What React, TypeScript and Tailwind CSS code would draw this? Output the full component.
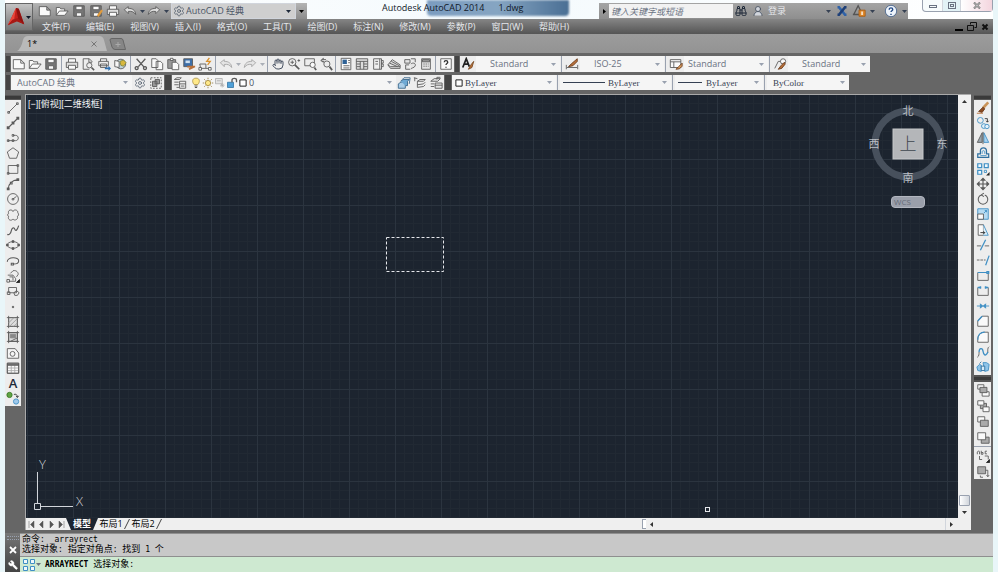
import { useState } from "react";
import type { ReactNode } from "react";
import { Binoculars, Hand, Settings, UserRound, Wrench } from "lucide-react";

const BLUE = "#3f8fc4";
const ORANGE = "#b8703a";

const ICONS: Record<string, ReactNode> = {
  new: <path d="M1.5 3h8.5l4 4v6.5h-12.5zM10 3v4h4" fill="#fafafa" />,
  open: <path d="M1.5 13V4h4l1 1.5H11V8M1.5 13l3.5-5h10l-4 5z" fill="#fafafa" />,
  save: (
    <>
      <path d="M2 2h12v12H2z" fill="#777" />
      <path d="M4.5 2.5h7v4h-7zM5 10h6v4H5z" fill="#fafafa" />
    </>
  ),
  saveAs: (
    <>
      <path d="M2 2h12v12H2z" fill="#777" />
      <path d="M4.5 2.5h7v4h-7zM5 10h6v4H5z" fill="#fafafa" />
      <path d="M15 7l-5 7" stroke="#e09a3c" strokeWidth="2.5" />
    </>
  ),
  print: (
    <>
      <path d="M4 6V2h8v4" fill="#fafafa" />
      <path d="M1.5 6h13v6h-13z" fill="#ddd" />
      <path d="M4 9.5h8V14H4z" fill="#fafafa" />
    </>
  ),
  preview: (
    <>
      <path d="M12.5 6V5l-3-3h-7v12h7M9 2v4h3.5" />
      <circle cx="9.5" cy="9.5" r="3" />
      <path d="M12 12l3 3" strokeWidth="1.8" />
    </>
  ),
  plot: (
    <>
      <path d="M4 5V2h7v3M2 5h11v5H2zM4 8h7v4H4z" fill="#eee" />
      <path d="M9 12h4v-2l3 3-3 3v-2H9z" fill="#2f6fb0" stroke="none" />
    </>
  ),
  dwf: (
    <>
      <circle cx="9" cy="8" r="5.5" fill="#bcd0d8" />
      <path d="M2 4l5 1v7l-5-1z" fill="#f7f7f7" />
      <path d="M8 5l4-1.5 3 3-3 4-3-1z" fill="#d8b73c" stroke="#8a8a3a" />
    </>
  ),
  cut: <path d="M3 2l8 9M13 2L5 11M3 11a1.7 1.7 0 1 0 .1 0zM12.500 11a1.7 1.7 0 1 0 .1 0z" strokeWidth="1.5" />,
  copyClip: <path d="M2 2h5l2 2v8H2zM7 5h5l2.5 2.5v7H7z" fill="#fafafa" />,
  paste: (
    <>
      <path d="M2 3h9v10H2z" fill="#999" />
      <path d="M5 1.5h3V4H5zM7 6h5l2.5 2.5v6H7z" fill="#fafafa" />
    </>
  ),
  match: (
    <>
      <path d="M2 2h10v9H2z" fill="#3c6ea8" />
      <path d="M4 4h5v3H4z" fill="#cfe0f0" stroke="none" />
      <path d="M6 11h9M8 14l6-3" stroke={ORANGE} strokeWidth="2" />
    </>
  ),
  blockEdit: (
    <>
      <path d="M2 8h7M9 8v5H3M3 13l-1-5M9 13h5" />
      <path d="M1 12h3v3H1zM12 12h3v3h-3z" fill="#fafafa" />
      <path d="M13 1l-3 4h4l-3 4" stroke="#d8902c" strokeWidth="1.5" />
    </>
  ),
  undo: <path d="M1.5 6.500L6 3v2c5 0 8 2 8.500 7-2-3-4.500-4-8.500-3.500V11z" fill="#ddd" />,
  redo: <path d="M14.5 6.500L10 3v2c-5 0-8 2-8.500 7 2-3 4.500-4 8.500-3.500V11z" fill="#ddd" />,
  zoomRt: (
    <>
      <circle cx="6" cy="6" r="4.2" />
      <path d="M9 9l5 5" strokeWidth="2" />
      <path d="M4 6h4M6 4v4M12 4h3M13.5 2.5v3" />
    </>
  ),
  zoomWin: (
    <>
      <path d="M9 10H2V2h11v5" />
      <circle cx="11" cy="9" r="3" fill="#fafafa" />
      <path d="M13 12l2 3" strokeWidth="2" />
    </>
  ),
  zoomPrev: (
    <>
      <circle cx="9" cy="8" r="3.5" />
      <path d="M12 11l3 4" strokeWidth="2" />
      <path d="M2 4l3-2.500V3h3M2 4l3 2V4.5" fill="#777" />
    </>
  ),
  props: (
    <>
      <path d="M2.5 1.5h11v13h-11z" fill="#fafafa" />
      <path d="M4 3h5v5H4z" fill="#2f6296" stroke="none" />
      <path d="M10.5 4h2M10.5 6.5h2M5 10h7M5 12.5h7" />
    </>
  ),
  design: <path d="M1.5 2h13v12h-13zM1.5 5h13M6 5v9M10 5v9M2 8h4M2 11h4M10 8h4M10 11h4" fill="#ddd" />,
  palettes: <path d="M3 2h9v12H3zM10 2v12M5 5h3M5 8h3M12 4h2v3h-2M12 8h2v3h-2" fill="#eee" />,
  sheets: <path d="M1 9l5-6 9 6v4H4zM1 9l3 2h11M3 7l9 4M5 5l9 5" fill="#ddd" />,
  markup: <path d="M2 3h6v4H2zM9 2h5v4M3 9v5h5M9 8c2-2 6-1 5 2s-5 2-5 4M3 9h4" fill="#e4e4e4" />,
  calc: (
    <>
      <path d="M3 2h10v12H3z" fill="#e5e5e5" />
      <path d="M4 3h8v2.5H4z" fill="#999" />
      <path d="M5 8h6M5 10.5h6" strokeDasharray="1.5 1" />
    </>
  ),
  help: (
    <>
      <path d="M2 2h12v12H2z" fill="#fafafa" />
      <path d="M6 6c0-2.500 4-2.500 4 0 0 1.500-2 1.500-2 3M8 11v1.2" strokeWidth="1.5" stroke="#333" />
    </>
  ),
  textStyle: (
    <>
      <path d="M2 12L6 2l3.500 9M3.5 8H8" stroke="#222" strokeWidth="2" />
      <path d="M14.5 5l-4 5-2 4 4-2z" fill={ORANGE} stroke="#7a4a22" />
    </>
  ),
  dimStyle: (
    <>
      <path d="M1.5 9v5M14.5 9v5M2 12h12" />
      <path d="M14 2L7 8l-3 3 5-1 5-5z" fill={ORANGE} stroke="#6b3c1c" />
    </>
  ),
  tableStyle: (
    <>
      <path d="M1.5 3h12v9h-12zM1.5 5.5h12M5.5 5.500V12" fill="#fafafa" />
      <path d="M15 7l-4 4-3 3 4-.5 3-3z" fill="#d89a5c" stroke="#6b3c1c" />
    </>
  ),
  leaderStyle: (
    <>
      <path d="M2 13l4-8h3" />
      <circle cx="11.5" cy="5" r="3" fill="#fafafa" />
      <path d="M13 6l-4 4-3 4 4-1 4-5z" fill={ORANGE} stroke="#6b3c1c" />
    </>
  ),
  mySpace: (
    <>
      <path d="M2 2h12v12H2z" strokeDasharray="2 1.5" />
      <path d="M4 6h5v6H4zM7 4h5v5H7z" fill="#999" />
    </>
  ),
  layers: (
    <>
      <path d="M1.5 4l3-2h5l-2 2zM1.5 7h5M1.5 10h5M4 13h3" />
      <path d="M7.5 6h7v8h-7zM7.5 9h7M9 11.5h4" fill="#eee" />
    </>
  ),
  bulb: (
    <>
      <path d="M8 1.500c-6 0-5 6-2.500 8.500h5C13 7.500 14 1.500 8 1.500z" fill="#ffe98a" stroke="#a58a3a" />
      <path d="M6 12h4M6.5 14h3" strokeWidth="1.5" />
    </>
  ),
  sun: (
    <>
      <circle cx="8" cy="8" r="3.5" fill="#ffe98a" stroke="#9a7c2c" />
      <path d="M8 1v2M8 13v2M1 8h2M13 8h2M3 3l1.500 1.500M11.500 11.500L13 13M13 3l-1.500 1.500M3 13l1.500-1.500" stroke="#8a6c2c" />
    </>
  ),
  vpFreeze: <path d="M2 2h9v7H2zM4 5h5M8 11h6M11 8v6M9 9l4 4M13 9l-4 4" stroke="#aaa" fill="#e4e4e4" />,
  unlock: (
    <>
      <path d="M2 7h8v7H2z" fill="#4fa0d8" stroke="#2c6f9f" />
      <path d="M8 7V4c0-3 6-3 6 0v3" strokeWidth="1.8" />
    </>
  ),
  swatch: <path d="M3 3h10v10H3z" fill="#fff" stroke="#222" strokeWidth="1.6" />,
  layerCur: (
    <>
      <path d="M1.5 9l3-2h7l-2 2v5h-8z" fill="#a9cde8" stroke="#39668a" />
      <path d="M4 6l3-2h7l-2 2v5h-2" fill="#6ea9d4" stroke="#39668a" />
      <path d="M6 4l2-2h7l-1 7" stroke="#39668a" />
    </>
  ),
  layerPrev: <path d="M1 2l4 1M5 6l3-2h6l-2 2zM5 10l7-1 2-2M5 13l7-1 2-2M5 6v7M2 2v4" />,
  layerState: <path d="M2 6l4-3h7l-3 3zM2 9h4M2 12h4M7 8h8v6H7zM7 10.5h8M9 4V1.500h4" fill="#e4e4e4" />,

  line: <path d="M3 13L13 3M2 12h2v2H2zM12 2h2v2h-2z" />,
  xline: <path d="M2 14L14 2M1.5 12.5h2v2h-2zM7 7h2v2H7zM12.5 1.5h2v2h-2z" strokeWidth="1.3" />,
  pline: <path d="M2 11h9c4 0 4-6 0-6H8M1.5 10h2v2h-2zM7 10h2v2H7zM7 4h2v2H7z" />,
  polygon: <path d="M8 2l6.500 4.800L12 14H4L1.500 6.800z" />,
  rect: <path d="M2.5 4h11v9h-11zM1.5 12h2v2h-2zM12.5 3h2v2h-2z" />,
  arc: <path d="M2.5 14C3 7 7 3.500 14 3M1.5 12.5h2v2h-2zM5 6h2v2H5zM12.5 2h2v2h-2z" strokeWidth="1.2" />,
  circle: (
    <>
      <circle cx="8" cy="8" r="6.2" />
      <path d="M8 8l4-3M7 7.5h2V9H7z" />
    </>
  ),
  cloud: <path d="M8 4c1-3 6-2 5.500 1.500C15 7 14.500 9 13 9.500c1.500 4-4 5.500-5 3-2 3-6.500 1-5-3C1.500 9 1.500 7 3 6 1.500 2 7 1 8 4z" />,
  spline: <path d="M1.5 13c2 1 4-1 4.500-4s3-5 4-2 3 1 4.500-4" strokeWidth="1.3" />,
  ellipse: (
    <>
      <ellipse cx="8" cy="8" rx="6.5" ry="3.8" />
      <path d="M.5 7h2v2h-2zM13.5 7h2v2h-2zM7 3h2v2H7zM7 11h2v2H7z" fill="#555" />
    </>
  ),
  ellipseArc: <path d="M1.500 9C1 3 15 3 14.500 8c0 2-2 3.500-6 3.500M6 10.5h2.5v2H6z" strokeWidth="1.2" />,
  insert: (
    <>
      <path d="M5 5l3-3c4-1 6 2 6 4l-2 3M2 7h6l3 4v3H4M1 12h3v3H1zM4 9h4v4" />
      <path d="M15.500 12v3.500H12z" fill="#222" stroke="#222" />
    </>
  ),
  block: <path d="M3 4h9v6H3zM1.500 9h3v3h-3zM12 7.500l3 2.500-2 3h-3l-1-3z" fill="#eee" />,
  point: <path d="M7.3 7.3h1.4v1.4H7.3z" fill="#555" />,
  hatch: (
    <>
      <path d="M3 3h10v10H3z" fill="#ddd" stroke="#999" />
      <path d="M3 1v14M13 1v14M1 3h14M1 13h14" />
      <path d="M3 9l6-6M4 13l9-9M9 13l4-4" stroke="#999" />
    </>
  ),
  gradient: (
    <>
      <path d="M3 3h10v10H3z" fill="#ddd" />
      <path d="M5 5h6v4H5z" fill="#888" stroke="#888" />
      <path d="M3 1v14M13 1v14M1 3h14M1 13h14M5 13l8-4" />
    </>
  ),
  region: (
    <>
      <path d="M1.5 3h9l4 5v6h-13z" fill="#f5f5f5" />
      <circle cx="7.5" cy="9" r="2.8" />
    </>
  ),
  table: (
    <>
      <path d="M1.5 2.5h13V14h-13z" fill="#fafafa" />
      <path d="M1.5 8h13M1.5 11h13M6 5v9M10 5v9" stroke="#aaa" />
      <path d="M1.5 2.5h13V14h-13zM1.5 4h13M1.5 5h13" />
    </>
  ),
  addSel: (
    <>
      <circle cx="4" cy="4.5" r="3" fill="#5fa544" stroke="#3d7a2a" />
      <path d="M9 4c2-1 4 0 4 3M11.5 5.5l1.500 2 1.500-2" stroke="#333" />
      <circle cx="11.5" cy="12" r="3" fill="#9fc8ea" stroke={BLUE} />
    </>
  ),

  erase: (
    <>
      <path d="M14 1.500L8 8" stroke="#c99358" strokeWidth="3" />
      <path d="M8 7l2 2-3 4-4-1z" fill="#8a4a20" stroke="#6b3c1c" />
      <path d="M1 14h7" stroke={ORANGE} />
    </>
  ),
  copy: (
    <>
      <circle cx="5" cy="5" r="3.3" stroke={BLUE} />
      <circle cx="9" cy="11.5" r="2.7" stroke={BLUE} fill="#e4f1fa" />
      <circle cx="12.5" cy="12" r="2.5" stroke={BLUE} fill="#e4f1fa" />
      <path d="M10 3h3v4M11.500 5.500L13 7l1.500-1.500" stroke="#333" />
    </>
  ),
  mirror: (
    <>
      <path d="M7 2v11H1.500z" fill="#9aa6ae" />
      <path d="M9 2v11h5.500z" fill="#a9d2f0" stroke={BLUE} />
      <path d="M8 1v14" />
    </>
  ),
  offset: (
    <>
      <path d="M2 13V9h3V6c0-5 7-5 7 0v3h2.500v4z" stroke="#2f6f9f" strokeWidth="1.4" />
      <path d="M5 11h7M7 9V6.500c0-1.500 3-1.500 3 0V9" stroke={BLUE} />
    </>
  ),
  array: (
    <>
      <path d="M2 2h4.500v4.500H2zM9.500 2H14v4.500H9.500zM2 9.500h4.500V14H2z" stroke={BLUE} strokeWidth="1.4" fill="#eef7fd" />
      <path d="M9.5 9.500H12V12H9.500z" stroke={BLUE} />
      <path d="M15.500 11.500v4h-4z" fill="#222" stroke="none" />
    </>
  ),
  move: <path d="M8 2v12M2 8h12M6 3.500L8 1.500l2 2zM6 12.500l2 2 2-2zM3.500 6l-2 2 2 2zM12.500 6l2 2-2 2z" strokeWidth="1.3" fill="#555" />,
  rotate: <path d="M6 3.300A5.500 5.500 0 1 0 10 3.300M6 3.300l3-2M6 3.300l3 2" strokeWidth="1.2" />,
  scale: (
    <>
      <path d="M2 2h12v12H2z" fill="#b6dbf2" stroke={BLUE} />
      <path d="M2 8h6.500v6H2z" fill="#fafafa" />
      <path d="M9 7l3-3M10 4h2v2" stroke={BLUE} />
    </>
  ),
  stretch: (
    <>
      <path d="M2.5 2h6v12h-6z" fill="#fafafa" />
      <path d="M8.500 2L14 14H8.500" stroke={BLUE} fill="#e0f0fa" />
      <path d="M5 11h5M8.500 9.500L10 11l-1.500 1.500" stroke="#222" />
    </>
  ),
  trim: (
    <>
      <path d="M1 9h5M10 9h5" />
      <path d="M11 2L5 14" stroke={BLUE} strokeWidth="1.4" />
    </>
  ),
  extend: (
    <>
      <path d="M1 8h10" strokeDasharray="3 1" />
      <path d="M15 3l-4 11" stroke={BLUE} strokeWidth="1.4" />
    </>
  ),
  breakPt: (
    <>
      <path d="M2 4v9h12V4" />
      <path d="M2 4h11M12.5 3h2v2h-2z" stroke={BLUE} strokeWidth="1.4" />
    </>
  ),
  breakTwo: (
    <>
      <path d="M2 4v9h12V4" />
      <path d="M2 4h4M10 4h4M5 2.5v3M11 2.5v3" stroke={BLUE} strokeWidth="1.8" />
    </>
  ),
  join: <path d="M1 8h14M5 5.500L7.500 8 5 10.500zM11 5.500L8.500 8l2.500 2.500z" stroke={BLUE} fill={BLUE} />,
  chamfer: (
    <>
      <path d="M2 14V8l5-5.500h7V14z" fill="#fafafa" />
      <path d="M2 8l5-5.500" stroke={BLUE} strokeWidth="1.5" />
    </>
  ),
  fillet: (
    <>
      <path d="M2 14v-3c0-5 3-8.500 8-8.500h4V14z" fill="#fafafa" />
      <path d="M2 11c0-5 3-8.500 8-8.500" stroke={BLUE} strokeWidth="1.5" />
    </>
  ),
  blend: (
    <>
      <path d="M1.5 14c2-1 2-4 2-6M15 2c-2 1-1.500 4-1.500 7" />
      <path d="M3.500 8c0-5 4-5 4.500-1s3 7 5.500 1" stroke={BLUE} strokeWidth="1.5" />
    </>
  ),
  explode: (
    <>
      <path d="M1 8l3-3 2 1v7l-4-1zM8 3h4l3 2-1 7-4 1z" fill="#8fc4e8" stroke={BLUE} />
      <path d="M6 7h4v5H6zM4 4l2-2" fill="#d7ecf8" stroke="#2f6f9f" />
    </>
  ),

  front: (
    <>
      <path d="M2 2h7v5H2zM7 10h8v5H7z" fill="#fafafa" />
      <path d="M4.5 5h8v6h-8z" fill="#aaa" />
    </>
  ),
  back: (
    <>
      <path d="M5 5h7v6H5z" fill="#aaa" />
      <path d="M2 2h7v5H2zM8 9h7v5.5H8z" fill="#fafafa" />
    </>
  ),
  above: (
    <>
      <path d="M2 2h8v6H2z" fill="#fafafa" />
      <path d="M5 6h9v7H5z" fill="#aaa" />
    </>
  ),
  under: (
    <>
      <path d="M6 7h9v7H6z" fill="#aaa" />
      <path d="M2 2h9v8H2z" fill="#fafafa" />
    </>
  ),
  annoFront: (
    <>
      <path d="M4 8v4h3M10 8h4v4M1.500 6V3.500L3 2l1 1.500V6M6 2v4h2V4H6M12.500 2.500h-2v3h2" />
      <path d="M15.500 12v3.500H12z" fill="#222" stroke="#222" />
    </>
  ),
  hatchBack: (
    <>
      <path d="M2 2h9v8H2z" fill="#aaa" />
      <path d="M5 12v2h3M13.5 6v7M12 11.5l1.500 2 1.500-2M13.5 6H11" />
    </>
  ),
};

function Icon({ name, className = "h-3.5 w-3.5" }: { name: string; className?: string }) {
  return (
    <svg viewBox="0 0 16 16" className={`shrink-0 ${className}`} fill="none" stroke="#5a5a5a" strokeWidth="1" aria-hidden="true">
      {ICONS[name]}
    </svg>
  );
}

function Caret({ className = "text-gray-500" }: { className?: string }) {
  return (
    <svg viewBox="0 0 5 3" className={`h-[3px] w-[5px] shrink-0 ${className}`} fill="currentColor" aria-hidden="true">
      <path d="M0 0h5L2.500 3z" />
    </svg>
  );
}

function ToolButton({ name, label, className = "w-4" }: { name: string; label: string; className?: string }) {
  return (
    <button type="button" title={label} aria-label={label} className={`flex h-[15px] shrink-0 items-center justify-center ${className}`}>
      <Icon name={name} />
    </button>
  );
}

function MoreButton({ label, caret }: { label: string; caret?: string }) {
  return (
    <button type="button" aria-label={label} className="flex w-2 shrink-0 items-center justify-center">
      <Caret className={caret} />
    </button>
  );
}

function Separator({ className = "ml-px mr-0.5" }: { className?: string }) {
  return <div className={`w-px shrink-0 self-stretch bg-gray-400 ${className}`} />;
}

function Grip({ className = "w-1.5" }: { className?: string }) {
  return <div className={`shrink-0 self-stretch border-x border-[#666] bg-[#444] ${className}`} />;
}

type ComboProps = {
  label: string;
  options: string[];
  className: string;
  textClass?: string;
  caret?: string;
  children?: ReactNode;
};

function Combo({ label, options, className, textClass = "text-gray-500", caret = "text-gray-400", children }: ComboProps) {
  const [value, setValue] = useState(options[0]);
  return (
    <div className={`relative flex h-full shrink-0 items-center ${className}`}>
      {children}
      <select
        aria-label={label}
        value={value}
        onChange={(e) => setValue(e.target.value)}
        className={`min-w-0 flex-1 appearance-none bg-transparent pr-2.5 leading-3 outline-none ${textClass}`}
      >
        {options.map((o) => (
          <option key={o}>{o}</option>
        ))}
      </select>
      <Caret className={`pointer-events-none absolute right-1 ${caret}`} />
    </div>
  );
}

const STANDARD_GROUPS = [
  [["new", "新建"], ["open", "打开"], ["save", "保存"]],
  [["print", "打印"], ["preview", "打印预览"], ["plot", "发布"], ["dwf", "三维DWF"]],
  [["cut", "剪切"], ["copyClip", "复制"], ["paste", "粘贴"], ["match", "特性匹配"], ["blockEdit", "块编辑器"]],
];

const PALETTES = [
  ["props", "特性"],
  ["design", "设计中心"],
  ["palettes", "工具选项板"],
  ["sheets", "图纸集管理器"],
  ["markup", "标记集管理器"],
  ["calc", "快速计算器"],
];

const DRAW_TOOLS = [
  ["line", "直线"],
  ["xline", "构造线"],
  ["pline", "多段线"],
  ["polygon", "多边形"],
  ["rect", "矩形"],
  ["arc", "圆弧"],
  ["circle", "圆"],
  ["cloud", "修订云线"],
  ["spline", "样条曲线"],
  ["ellipse", "椭圆"],
  ["ellipseArc", "椭圆弧"],
  ["insert", "插入块"],
  ["block", "创建块"],
  ["point", "点"],
  ["hatch", "图案填充"],
  ["gradient", "渐变色"],
  ["region", "面域"],
  ["table", "表格"],
];

const MODIFY_TOOLS = [
  ["erase", "删除"],
  ["copy", "复制"],
  ["mirror", "镜像"],
  ["offset", "偏移"],
  ["array", "阵列"],
  ["move", "移动"],
  ["rotate", "旋转"],
  ["scale", "缩放"],
  ["stretch", "拉伸"],
  ["trim", "修剪"],
  ["extend", "延伸"],
  ["breakPt", "打断于点"],
  ["breakTwo", "打断"],
  ["join", "合并"],
  ["chamfer", "倒角"],
  ["fillet", "圆角"],
  ["blend", "光顺曲线"],
  ["explode", "分解"],
];

const ORDER_TOOLS = [
  ["front", "前置"],
  ["back", "后置"],
  ["above", "置于对象之上"],
  ["under", "置于对象之下"],
];

const MENUS = [
  "文件(F)",
  "编辑(E)",
  "视图(V)",
  "插入(I)",
  "格式(O)",
  "工具(T)",
  "绘图(D)",
  "标注(N)",
  "修改(M)",
  "参数(P)",
  "窗口(W)",
  "帮助(H)",
];

function TitleBar() {
  return (
    <div className="flex h-[19px] items-end bg-gradient-to-r from-white via-[#f4fafd] to-white">
      <div className="ml-7 flex h-4 w-[274px] shrink-0 items-center bg-gradient-to-b from-[#b4b4b4] to-[#8c8c8c] pl-[3px]">
        {[["new", "新建"], ["open", "打开"], ["save", "保存"], ["saveAs", "另存为"], ["print", "打印"], ["undo", "放弃"]].map(
          ([name, label]) => (
            <ToolButton key={name} name={name} label={label} className="w-[17px]" />
          )
        )}
        <MoreButton label="放弃列表" caret="text-gray-700" />
        <ToolButton name="redo" label="重做" />
        <MoreButton label="重做列表" caret="text-gray-700" />
        <Combo
          label="工作空间"
          options={["AutoCAD 经典", "草图与注释"]}
          className="ml-px w-[125px] border border-gray-300 bg-[#cfcfcf] pl-px"
          textClass="pl-px text-gray-600"
          caret="text-gray-800"
        >
          <Settings className="h-3 w-3 text-gray-600" strokeWidth={1.5} />
        </Combo>
        <button type="button" aria-label="自定义快速访问工具栏" className="flex flex-1 items-center justify-center">
          <Caret className="text-black" />
        </button>
      </div>

      <div className="relative flex flex-1 items-start self-stretch overflow-hidden">
        <div className="absolute left-[120px] top-0 h-4 w-[142px] rounded-b-sm bg-gradient-to-r from-[#7b9cc0] via-[#86a5c2] to-[#4a6f94] blur-[1px]" />
        <h1 className="relative whitespace-pre pl-[75px] pt-0.5 leading-3 text-gray-900">Autodesk AutoCAD 2014</h1>
        <span className="relative pl-3.5 pt-0.5 leading-3 text-gray-900">1.dwg</span>
      </div>

      <div className="flex h-4 w-[309px] shrink-0 items-center bg-gradient-to-b from-[#a4a4a4] to-[#8e8e8e]">
        <button type="button" aria-label="展开搜索" className="flex w-2.5 items-center justify-center self-stretch">
          <svg viewBox="0 0 3 5" className="h-[5px] w-[3px]" aria-hidden="true">
            <path d="M0 0v5l3-2.500z" />
          </svg>
        </button>
        <input
          aria-label="搜索"
          placeholder="键入关键字或短语"
          className="h-3.5 w-[124px] bg-[#f2f2f2] pl-0.5 italic outline-none placeholder:text-gray-500"
        />
        <button type="button" aria-label="查找" className="ml-0.5 w-[17px]">
          <Binoculars className="h-3 w-3 text-gray-800" />
        </button>
        <button type="button" className="flex items-center gap-1 text-gray-200">
          <UserRound className="h-3 w-3 fill-gray-300 text-gray-700" strokeWidth={1.5} />
          登录
        </button>
        <div className="flex flex-1 items-center justify-end">
          <MoreButton label="登录选项" caret="text-gray-700" />
          <button type="button" aria-label="Exchange" className="ml-1 w-4">
            <svg viewBox="0 0 16 16" className="h-3 w-3" fill="none" strokeWidth="3.5" aria-hidden="true">
              <path d="M2 3h2l8 10h2" stroke="#2f62a8" />
              <path d="M14 3h-2L4 13H2" stroke="#1d3f78" />
            </svg>
          </button>
          <button type="button" aria-label="保持连接" className="w-4">
            <svg viewBox="0 0 16 16" className="h-3.5 w-3.5" fill="none" aria-hidden="true">
              <path d="M2 12L7 2l3 6M1 12h7" stroke="#555" strokeWidth="1.5" />
              <path d="M8 7h7v7H8z" fill="#e08a2c" stroke="#a85c14" />
              <path d="M11.5 8.5v4" stroke="#fff" strokeWidth="1.5" />
            </svg>
          </button>
          <MoreButton label="连接选项" caret="text-gray-700" />
          <button type="button" aria-label="帮助" className="ml-2 w-4">
            <svg viewBox="0 0 16 16" className="h-3.5 w-3.5" fill="none" aria-hidden="true">
              <circle cx="8" cy="8" r="6.5" fill="#eef4fb" stroke="#49658c" />
              <path d="M6 6.500c0-3 4-2.500 4-.3 0 1.500-2 1.500-2 3M8 11v1.500" stroke="#234a86" strokeWidth="1.6" />
            </svg>
          </button>
          <MoreButton label="帮助选项" caret="text-gray-700" />
        </div>
      </div>

      <div className="ml-3.5 flex h-3 w-[71px] shrink-0 self-start divide-x divide-gray-300 rounded-b border border-t-0 border-gray-400 bg-[#f7fbfc]">
        <button type="button" aria-label="最小化" className="flex w-5 items-center justify-center pt-0.5">
          <span className="h-[3px] w-2 border border-gray-500" />
        </button>
        <button type="button" aria-label="还原" className="flex w-[18px] items-center justify-center bg-[#e2f2f6]">
          <span className="flex h-[7px] w-2 items-center justify-center border border-gray-500">
            <span className="h-[3px] w-1 border border-gray-500" />
          </span>
        </button>
        <button type="button" aria-label="关闭" className="flex flex-1 items-center justify-center bg-gradient-to-r from-white to-[#f3d5de]">
          <svg viewBox="0 0 8 7" className="h-[7px] w-2" fill="none" aria-hidden="true">
            <path d="M1 .5l6 6M7 .5l-6 6" stroke="#666" strokeWidth="2" />
            <path d="M1 .5l6 6M7 .5l-6 6" stroke="#fff" strokeWidth=".7" />
          </svg>
        </button>
      </div>
    </div>
  );
}

function MenuBar() {
  return (
    <nav className="flex h-[15px] items-center bg-gradient-to-b from-[#858585] to-[#555] pl-[37px] pr-1 text-gray-200">
      <div className="flex flex-1 gap-4">
        {MENUS.map((m) => (
          <button key={m} type="button" className="whitespace-nowrap leading-3">
            {m}
          </button>
        ))}
      </div>
      <div className="flex items-center gap-1 text-black">
        <button type="button" aria-label="最小化图形" className="flex h-2 w-2 items-end">
          <span className="h-0.5 w-full bg-black" />
        </button>
        <button type="button" aria-label="还原图形">
          <svg viewBox="0 0 10 9" className="h-[9px] w-2.5" fill="none" stroke="#111" aria-hidden="true">
            <path d="M3.5 2.500v-2h6v5h-2M.5 3.5h6v5h-6z" />
          </svg>
        </button>
        <button type="button" aria-label="关闭图形">
          <svg viewBox="0 0 8 8" className="h-2 w-2" stroke="#111" strokeWidth="2" aria-hidden="true">
            <path d="M1.5 1.500l5 5M6.500 1.500l-5 5" />
          </svg>
        </button>
      </div>
    </nav>
  );
}

function FileTabs() {
  return (
    <div className="flex h-[19px] items-center bg-gradient-to-b from-[#9c9c9c] to-[#939393] pl-3">
      <div className="relative flex h-[15px] w-[90px] items-center justify-between pl-2.5 pr-2.5">
        <svg viewBox="0 0 90 15" className="absolute inset-0 h-full w-full" aria-hidden="true">
          <path d="M0 15Q4 13 6 4Q7 0 11 0H82Q86 0 87 4L90 15z" fill="#b9b9b9" />
        </svg>
        <button type="button" className="relative leading-3 text-black">
          1*
        </button>
        <button type="button" aria-label="关闭标签" className="relative">
          <svg viewBox="0 0 6 6" className="h-1.5 w-1.5" stroke="#777" aria-hidden="true">
            <path d="M.5 .5l5 5M5.500 .5l-5 5" />
          </svg>
        </button>
      </div>
      <button type="button" aria-label="新建标签" className="ml-0.5">
        <svg viewBox="0 0 17 12" className="h-3 w-[17px]" aria-hidden="true">
          <path d="M1 2Q1 .5 3 .5H12Q13.500 .5 14 2L16.500 11.500H6Q3.500 11 3 9z" fill="#868686" stroke="#666" />
          <path d="M9 4v5M6.5 6.5h5" stroke="#aaa" />
        </svg>
      </button>
    </div>
  );
}

function Toolbars() {
  return (
    <div className="flex flex-col gap-[3px] overflow-hidden bg-[#666] pb-1 pt-[3px]">
      <div className="flex h-4 items-center">
        <div className="flex h-full shrink-0 items-center bg-[#ededed]">
          <Grip />
          {STANDARD_GROUPS.map((group) => (
            <div key={group[0][0]} className="flex h-full items-center">
              {group.map(([name, label]) => (
                <ToolButton key={name} name={name} label={label} />
              ))}
              <Separator className="mx-0.5" />
            </div>
          ))}
          <div className="flex opacity-50">
            <ToolButton name="undo" label="放弃" />
            <MoreButton label="放弃列表" />
            <ToolButton name="redo" label="重做" />
            <MoreButton label="重做列表" />
          </div>
          <Separator />
          <button type="button" aria-label="实时平移" className="flex w-4 justify-center">
            <Hand className="h-3 w-3 text-gray-700" strokeWidth={1.8} />
          </button>
          <ToolButton name="zoomRt" label="实时缩放" />
          <ToolButton name="zoomWin" label="窗口缩放" />
          <ToolButton name="zoomPrev" label="缩放上一个" />
          <Separator />
          {PALETTES.map(([name, label]) => (
            <ToolButton key={name} name={name} label={label} />
          ))}
          <Separator />
          <ToolButton name="help" label="帮助" />
        </div>
        <div className="flex h-full shrink-0 items-center bg-[#ededed]">
          <Grip />
          <ToolButton name="textStyle" label="文字样式" />
          <Combo label="文字样式控制" options={["Standard", "Annotative"]} className="w-[84px] bg-[#f5f5f5] pl-3.5" />
          <Separator />
          <ToolButton name="dimStyle" label="标注样式" />
          <Combo label="标注样式控制" options={["ISO-25", "Standard"]} className="w-[84px] bg-[#f5f5f5] pl-3.5" />
          <Separator />
          <ToolButton name="tableStyle" label="表格样式" />
          <Combo label="表格样式控制" options={["Standard"]} className="w-[84px] bg-[#f5f5f5] pl-1" />
          <Separator />
          <ToolButton name="leaderStyle" label="多重引线样式" />
          <Combo label="多重引线样式控制" options={["Standard", "Annotative"]} className="w-[82px] bg-[#f5f5f5] pl-3.5" />
        </div>
      </div>

      <div className="flex h-[15px] items-center">
        <div className="flex h-full shrink-0 items-center bg-[#ededed]">
          <Grip />
          <Combo label="工作空间控制" options={["AutoCAD 经典", "草图与注释"]} className="w-[121px] bg-[#f5f5f5] pl-1.5" />
          <button type="button" aria-label="工作空间设置" className="flex w-4 justify-center">
            <Settings className="h-3 w-3 text-gray-600" strokeWidth={1.5} />
          </button>
          <ToolButton name="mySpace" label="我的工作空间" />
        </div>
        <div className="flex h-full shrink-0 items-center bg-[#ededed]">
          <Grip className="w-2" />
          <ToolButton name="layers" label="图层特性管理器" />
          <Combo label="图层控制" options={["0"]} className="ml-0.5 w-[206px] bg-[#f5f5f5]" textClass="pl-px text-gray-600">
            <Icon name="bulb" className="h-3 w-3" />
            <Icon name="sun" className="h-3 w-3" />
            <Icon name="vpFreeze" className="h-3 w-3" />
            <Icon name="unlock" className="h-3 w-3" />
            <Icon name="swatch" className="h-2.5 w-2.5" />
          </Combo>
          <ToolButton name="layerCur" label="将对象的图层置为当前" />
          <ToolButton name="layerPrev" label="上一个图层" />
          <ToolButton name="layerState" label="图层状态管理器" />
        </div>
        <div className="flex h-full shrink-0 items-center bg-[#ededed] font-['Liberation_Serif',serif]">
          <Grip className="w-2" />
          <Combo label="颜色控制" options={["ByLayer", "ByBlock"]} className="w-[104px] bg-[#f5f5f5] pl-0.5" textClass="pl-px text-gray-700">
            <Icon name="swatch" className="h-2.5 w-2.5" />
          </Combo>
          <Separator />
          <Combo
            label="线型控制"
            options={["ByLayer", "ByBlock", "Continuous"]}
            className="w-[111px] gap-[3px] bg-[#f5f5f5] pl-[3px]"
            textClass="text-gray-700"
          >
            <span className="h-px w-[42px] bg-gray-700" />
          </Combo>
          <Separator />
          <Combo label="线宽控制" options={["ByLayer", "ByBlock"]} className="w-[88px] gap-1 bg-[#f5f5f5] pl-[3px]" textClass="text-gray-700">
            <span className="h-px w-6 bg-gray-700" />
          </Combo>
          <Separator />
          <Combo label="打印样式控制" options={["ByColor"]} className="w-[82px] bg-[#f5f5f5] pl-1.5" textClass="text-gray-700" />
        </div>
      </div>
    </div>
  );
}

function ViewCube() {
  return (
    <div className="absolute right-2.5 top-[7px] flex flex-col items-center gap-2.5">
      <svg viewBox="0 0 80 84" className="h-[84px] w-20" fontFamily="'Noto Sans CJK SC', sans-serif" textAnchor="middle">
        <circle cx="40" cy="42" r="33" fill="none" stroke="#47505c" strokeWidth="7" />
        <rect x="25" y="27" width="30" height="30" fill="#b4b6b9" stroke="#c6c8ca" />
        <text x="40" y="48" fontSize="17" fontWeight="300" fill="#3f464e">
          上
        </text>
        <g fontSize="11" fill="#b9bec4">
          <text x="40" y="13">北</text>
          <text x="40" y="80">南</text>
          <text x="6" y="46">西</text>
          <text x="74" y="46">东</text>
        </g>
      </svg>
      <button
        type="button"
        className="flex h-3 w-[34px] items-center rounded-sm border border-[#b3b7c0] bg-[#9a9faa] pl-0.5 text-[8px] leading-none text-[#666c78]"
      >
        WCS
      </button>
    </div>
  );
}

function Viewport() {
  return (
    <div className="relative min-h-0 flex-1 overflow-hidden bg-[#1c242f]">
      <svg className="absolute inset-0 h-full w-full" aria-hidden="true">
        <defs>
          <pattern id="grid" x="1" y="18" width="46" height="46" patternUnits="userSpaceOnUse">
            <path d="M9.5 0v46M18.5 0v46M27.5 0v46M36.5 0v46M0 9.5h46M0 18.5h46M0 27.5h46M0 36.5h46" stroke="#212933" />
            <path d="M.5 0v46M0 .5h46" stroke="#2b343f" />
          </pattern>
        </defs>
        <rect width="100%" height="100%" fill="url(#grid)" />
        <rect x="360.5" y="142.5" width="57" height="34" fill="none" stroke="#e5e7eb" strokeDasharray="3 2" />
        <rect x="679.5" y="412.5" width="4" height="4" fill="none" stroke="#e5e7eb" />
      </svg>
      <div className="absolute left-0.5 top-[3px] flex font-['Liberation_Sans','Noto_Sans_CJK_SC',sans-serif] leading-3 text-gray-100">
        <button type="button">[−]</button>
        <button type="button">[俯视]</button>
        <button type="button">[二维线框]</button>
      </div>
      <svg viewBox="0 0 64 64" className="absolute bottom-1 left-2 h-16 w-16" fill="none" stroke="#d1d5db" aria-hidden="true">
        <path d="M3.5 22v31M7 56.5h32M.5 53.5h6v6h-6z" />
        <g fill="#d1d5db" stroke="none" fontFamily="'Open Sans', sans-serif" fontSize="13" fontWeight="300">
          <text x="5" y="19">Y</text>
          <text x="42" y="56">X</text>
        </g>
      </svg>
      <ViewCube />
    </div>
  );
}

function ScrollArrow({ label, d, className }: { label: string; d: string; className: string }) {
  return (
    <button type="button" aria-label={label} className={`flex shrink-0 items-center justify-center ${className}`}>
      <svg viewBox="0 0 5 5" className="h-[5px] w-[5px]" fill="#333" aria-hidden="true">
        <path d={d} />
      </svg>
    </button>
  );
}

function LayoutTabs() {
  return (
    <div className="flex h-3 shrink-0 items-stretch bg-[#efefef] text-black">
      <div className="flex w-10 items-center justify-around">
        {[
          ["第一个", "M1 0v7M6 0v7L2.500 3.500z"],
          ["上一个", "M5 0v7L1.500 3.500z"],
          ["下一个", "M2 0v7l3.500-3.500z"],
          ["最后一个", "M1 0v7l3.500-3.500zM6 0v7"],
        ].map(([label, d]) => (
          <button key={label} type="button" aria-label={label}>
            <svg viewBox="0 0 7 7" className="h-[7px] w-[7px]" fill="#555" stroke="#555" strokeWidth=".5" aria-hidden="true">
              <path d={d} />
            </svg>
          </button>
        ))}
      </div>
      <button type="button" className="relative flex w-8 items-center justify-center text-white">
        <svg viewBox="0 0 32 12" className="absolute inset-0 h-full w-full" aria-hidden="true">
          <path d="M0 0h32l-5 12H5z" fill="#1c242f" />
        </svg>
        <span className="relative font-bold leading-3">模型</span>
      </button>
      {["布局1", "布局2"].map((tab) => (
        <div key={tab} className="flex w-8 items-center">
          <button type="button" className="flex-1 whitespace-nowrap leading-3">
            {tab}
          </button>
          <svg viewBox="0 0 6 12" className="h-3 w-1.5" stroke="#444" aria-hidden="true">
            <path d="M5.500 1L.5 11" />
          </svg>
        </div>
      ))}
      <div className="flex-1" />
      <div className="flex w-1/3 items-center">
        <div className="h-2.5 w-1 border border-r-0 border-gray-400 bg-white" />
        <ScrollArrow label="向左滚动" d="M4 0v5L1 2.500z" className="w-2.5" />
        <div className="flex-1" />
        <ScrollArrow label="向右滚动" d="M1 0v5l3-2.500z" className="h-full w-3 border-l border-gray-300" />
      </div>
      <div className="w-3.5" />
    </div>
  );
}

function SideGrip() {
  return <div className="mt-px h-[5px] shrink-0 border-y border-[#555] bg-[#3a3a3a]" />;
}

function CommandLine() {
  const [command, setCommand] = useState("");
  return (
    <footer className="flex shrink-0 bg-[#4a4a4a]">
      <div className="flex w-[15px] shrink-0 flex-col items-center justify-between bg-gradient-to-b from-[#777] to-[#444] pb-0.5 pt-[3px]">
        <div className="h-1 w-3 border-y border-dotted border-gray-400" />
        <button type="button" aria-label="关闭命令行" className="flex">
          <svg viewBox="0 0 8 8" className="h-2 w-2" stroke="#fff" strokeWidth="1.8" aria-hidden="true">
            <path d="M1 1l6 6M7 1L1 7" />
          </svg>
        </button>
        <button type="button" aria-label="自定义" className="flex">
          <Wrench className="h-2.5 w-2.5 -scale-x-100 fill-white text-white" />
        </button>
      </div>
      <div className="min-w-0 flex-1 text-black">
        <div className="border-y border-[#8f8f8f] bg-[#c8c8c8] pb-0.5 pl-0.5 font-['DejaVu_Sans_Mono','Noto_Sans_CJK_SC',monospace] text-[8px] leading-[10px]">
          <p className="h-2.5">
            <span className="text-[9px]">命令</span>: _arrayrect
          </p>
          <p className="h-2.5">
            <span className="text-[9px]">选择对象</span>: <span className="text-[9px]">指定对角点</span>: <span className="text-[9px]">找到</span> 1{" "}
            <span className="text-[9px]">个</span>
          </p>
        </div>
        <div className="flex h-[15px] items-center bg-[#cee9d1] pl-[3px] font-['DejaVu_Sans_Mono','Noto_Sans_CJK_SC',monospace] text-[8px]">
          <button type="button" aria-label="最近使用的命令" className="flex items-center gap-px">
            <svg viewBox="0 0 12 12" className="h-3 w-3" fill="#eef7fb" stroke={BLUE} aria-hidden="true">
              <path d="M.5 .5h4v4h-4zM7.500 .5h4v4h-4zM.5 7.500h4v4h-4zM7.500 7.500h4v4h-4z" />
            </svg>
            <Caret />
          </button>
          <label htmlFor="command" className="whitespace-pre pl-1">
            <b>ARRAYRECT</b> <span className="text-[9px]">选择对象</span>:
          </label>
          <input
            id="command"
            value={command}
            onChange={(e) => setCommand(e.target.value)}
            className="ml-1 min-w-0 flex-1 bg-transparent outline-none"
          />
        </div>
      </div>
    </footer>
  );
}

export default function App() {
  return (
    <div className="flex min-h-screen flex-col overflow-hidden bg-[#e9f6f9] px-[5px] font-['Open_Sans','Noto_Sans_CJK_SC',sans-serif] text-[9px]">
      <header className="relative shrink-0">
        <TitleBar />
        <MenuBar />
        <button
          type="button"
          aria-label="应用程序菜单"
          className="absolute left-0 top-[3px] flex h-7 w-7 items-center border border-[#666] bg-gradient-to-b from-[#c4c4c4] to-[#777]"
        >
          <svg viewBox="0 0 20 22" className="h-5 w-5" aria-hidden="true">
            <path d="M10 1l3 1 6 17-6-3-5-3-5 6-2 1z" fill="#c4201c" />
            <path d="M10 1L1 20l7-7z" fill="#e8483c" />
            <path d="M10 1l3 1 6 17-6-3z" fill="#8c1210" />
            <path d="M6 14l6-2 7 7-8-3-10 4z" fill="#a81814" />
          </svg>
          <Caret className="text-gray-900" />
        </button>
      </header>
      <FileTabs />
      <Toolbars />

      <main className="flex flex-1 bg-[#666] pb-[3px]">
        <aside className="w-4 shrink-0">
          <SideGrip />
          <div className="flex h-[306px] flex-col items-center justify-between bg-[#ededed]">
            {DRAW_TOOLS.map(([name, label]) => (
              <ToolButton key={name} name={name} label={label} />
            ))}
            <button type="button" aria-label="多行文字" className="h-[15px] text-[13px] font-semibold leading-[15px] text-gray-800">
              A
            </button>
            <ToolButton name="addSel" label="添加选定对象" />
          </div>
        </aside>

        <section className="ml-1 flex min-w-0 flex-1 flex-col border-l border-t border-[#aaa]">
          <div className="flex flex-1">
            <Viewport />
            <div className="flex w-[13px] shrink-0 flex-col bg-[#f0f0f0]">
              <ScrollArrow label="向上滚动" d="M0 4h5L2.500 1z" className="h-3" />
              <div className="flex-1" />
              <div className="mx-px h-[11px] rounded-[1px] border border-gray-400 bg-gradient-to-r from-white to-gray-300" />
              <ScrollArrow label="向下滚动" d="M0 1h5L2.500 4z" className="h-3" />
            </div>
          </div>
          <LayoutTabs />
        </section>

        <aside className="ml-[3px] mr-0.5 w-[17px] shrink-0">
          <SideGrip />
          <div className="flex h-[275px] flex-col items-center justify-between bg-[#ededed]">
            {MODIFY_TOOLS.map(([name, label]) => (
              <ToolButton key={name} name={name} label={label} />
            ))}
          </div>
          <div className="h-[7px] border-y-2 border-[#555] bg-[#3a3a3a]" />
          <div className="flex flex-col items-center gap-px bg-[#ededed]">
            {ORDER_TOOLS.map(([name, label]) => (
              <ToolButton key={name} name={name} label={label} />
            ))}
            <div className="h-px w-full bg-gray-400" />
            <ToolButton name="annoFront" label="注释前置" />
            <ToolButton name="hatchBack" label="图案填充后置" />
          </div>
        </aside>
      </main>
      <CommandLine />
    </div>
  );
}
